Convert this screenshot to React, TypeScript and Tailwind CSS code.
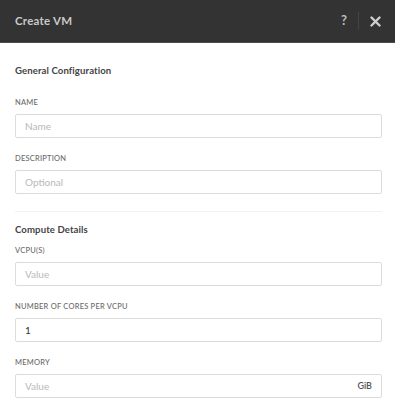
import React from 'react';

const font = { fontFamily: 'Lato, "Open Sans", "Liberation Sans", sans-serif' };

function Field({ label, placeholder, value, suffix, className = '' }: { label: string; placeholder?: string; value?: string; suffix?: string; className?: string }) {
    return (
        <div className={className}>
            <div className="h-[12px] leading-[12px] text-[7.5px] font-medium uppercase tracking-[0.03em] text-[#6a6a6a] mb-[5px]">
                {label}
            </div>
            <div className="h-[24px] border border-[#dcdcdc] rounded-[2px] bg-white flex items-center px-[9px]">
                {value ? (
                    <span className="flex-1 text-[10px] text-[#333]">{value}</span>
                ) : (
                    <span className="flex-1 text-[10px] text-[#b8b8b8]">{placeholder}</span>
                )}
                {suffix && <span className="text-[9px] font-semibold text-[#555]">{suffix}</span>}
            </div>
        </div>
    );
}

export default function App() {
    return (
        <div className="w-[395px] h-[400px] bg-white overflow-hidden" style={font}>
            <div className="h-[43px] bg-[#333333] flex items-center pl-[15px] pr-[13px] border-b border-[#4a4a4a]">
                <span className="flex-1 text-[11.5px] font-bold tracking-[0.02em] text-[#c8c8c8]">Create VM</span>
                <span className="text-[13px] font-bold text-[#bdbdbd] w-[12px] text-center mr-[-3px]">?</span>
                <div className="w-px h-[18px] bg-[#444] mx-[11px]" />
                <svg width="11" height="11" viewBox="0 0 11 11" className="mr-[1px]">
                    <path d="M1.5 1.5 L9.5 9.5 M9.5 1.5 L1.5 9.5" stroke="#cfcfcf" strokeWidth="2.4" strokeLinecap="round" />
                </svg>
            </div>

            <div className="px-[15px] pr-[13px]">
                <div className="mt-[20px] h-[16px] leading-[16px] text-[9.6px] font-bold tracking-[0.01em] text-[#444]">General Configuration</div>
                <Field className="mt-[18px]" label="Name" placeholder="Name" />
                <Field className="mt-[15px]" label="Description" placeholder="Optional" />

                <div className="mt-[17px] border-t border-[#f2f2f2]" />

                <div className="mt-[10px] h-[16px] leading-[16px] text-[9.6px] font-bold tracking-[0.01em] text-[#444]">Compute Details</div>
                <Field className="mt-[7px]" label="vCPU(s)" placeholder="Value" />
                <Field className="mt-[15px]" label="Number of Cores per vCPU" value="1" />
                <Field className="mt-[15px]" label="Memory" placeholder="Value" suffix="GiB" />
            </div>
        </div>
    );
}
